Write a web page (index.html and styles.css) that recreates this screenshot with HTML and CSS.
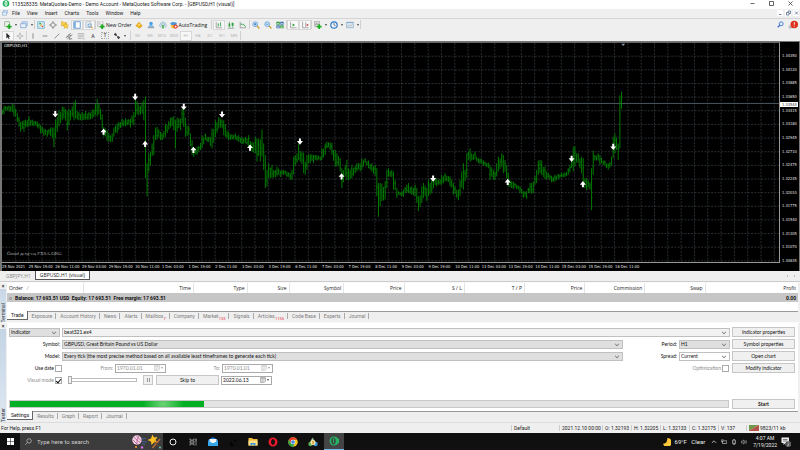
FILE: index.html
```html
<!DOCTYPE html>
<html lang="en">
<head>
<meta charset="utf-8">
<title>113528335: MetaQuotes-Demo</title>
<link rel="stylesheet" href="styles.css">
</head>
<body>
<svg class="defs" aria-hidden="true">
  <symbol id="i-newchart" viewBox="0 0 10 10"><rect x="1" y="1" width="6" height="6" fill="#e9f3e6" stroke="#6a8f66" stroke-width=".7"/><path d="M6.500 4v6M3.500 7h6" stroke="#18a81e" stroke-width="2.200"/></symbol>
  <symbol id="i-profiles" viewBox="0 0 10 10"><rect x="2.500" y="1" width="6.500" height="5" fill="#cfe2f5" stroke="#7fa6d0" stroke-width=".8"/><rect x="1" y="3.500" width="6.500" height="5" fill="#e8f1fb" stroke="#6a96c6" stroke-width=".8"/></symbol>
  <symbol id="i-market" viewBox="0 0 10 10"><rect x="1" y="1" width="8" height="8" fill="#dff0fa" stroke="#5badd4" stroke-width="1"/><path d="M2 4l2-2 1.500 2z" fill="#1a9b35"/><path d="M5 6l2 2 1.500-2z" fill="#e05a20"/><path d="M3 7l4-4" stroke="#e0a020"/></symbol>
  <symbol id="i-cross" viewBox="0 0 10 10"><circle cx="5" cy="5" r="2.800" fill="none" stroke="#777" stroke-width=".9"/><path d="M5 0v3M5 7v3M0 5h3M7 5h3" stroke="#777" stroke-width=".9"/></symbol>
  <symbol id="i-nav" viewBox="0 0 10 10"><path d="M0 1h3l1 1h3v4H0z" fill="#f5cf5a" stroke="#c99820" stroke-width=".5"/><path d="M6 3l1.200 2 2.300.3-1.700 1.500.5 2.400L6 8l-2.200 1.200.5-2.400-1.700-1.500L5 5z" fill="#ffd83a" stroke="#c18d12" stroke-width=".5"/></symbol>
  <symbol id="i-term" viewBox="0 0 10 10"><rect x="1" y="1" width="8" height="8" fill="#fff" stroke="#4d8ac8" stroke-width="1"/><path d="M1.500 1.500h2v7h-2z" fill="#6ea6dd"/></symbol>
  <symbol id="i-test" viewBox="0 0 10 10"><rect x="1" y="1" width="6.500" height="7" fill="#eef3f8" stroke="#9aacbe" stroke-width=".8"/><path d="M2 4h3M2 6h2" stroke="#9aacbe" stroke-width=".7"/><circle cx="6" cy="5.500" r="2" fill="#cfe7f7" stroke="#5c8ab3" stroke-width=".8"/><path d="M7.500 7l2 2" stroke="#d09a28" stroke-width="1.400"/></symbol>
  <symbol id="i-order" viewBox="0 0 10 10"><path d="M1 0h5l1.500 1.500V7H1z" fill="#f6f6f6" stroke="#999" stroke-width=".7"/><path d="M2 2.500h3M2 4h3" stroke="#999" stroke-width=".6"/><path d="M6.500 4v6M3.500 7h6" stroke="#18a81e" stroke-width="2.200"/></symbol>
  <symbol id="i-gold" viewBox="0 0 10 10"><path d="M1 6l4-4.500L9 6 6 9z" fill="#f2b51d" stroke="#c89020" stroke-width=".7"/><path d="M3 5.500L5 3l2 2z" fill="#ffe58a"/></symbol>
  <symbol id="i-person" viewBox="0 0 10 10"><circle cx="5" cy="3" r="2.200" fill="#4b9fe0"/><path d="M1.500 7.500Q1.500 5 5 5t3.500 2.500z" fill="#79b9ea"/><path d="M1 8.300h8" stroke="#999" stroke-width="1.400"/></symbol>
  <symbol id="i-signal" viewBox="0 0 10 10"><path d="M2.500 8.500a4 4 0 1 1 5 0M3.600 6.600a2 2 0 1 1 2.800 0" fill="none" stroke="#88b2cc" stroke-width="1"/><path d="M5 5v4.500" stroke="#29a33a" stroke-width="1.800"/></symbol>
  <symbol id="i-auto" viewBox="0 0 10 10"><ellipse cx="4.500" cy="3.200" rx="4" ry="2" fill="#4b96d2"/><path d="M1 5h6l-1 4H2z" fill="#f0bd36"/><circle cx="7" cy="7" r="2.700" fill="#e0301e"/><rect x="5.900" y="5.900" width="2.200" height="2.200" fill="#fff"/></symbol>
  <symbol id="i-bars" viewBox="0 0 10 10"><path d="M1.500 1v7.500h7.500" fill="none" stroke="#777" stroke-width=".8"/><path d="M4 3v4M4 4h1M7 1.500v5M7 6H6" stroke="#1d9a3a" stroke-width="1"/></symbol>
  <symbol id="i-candle" viewBox="0 0 10 10"><path d="M1 9h8M3 1v7M7 2v6" stroke="#5a8c66" stroke-width=".8"/><path d="M2 3h2v4H2zM5.800 2.500h2.400V6H5.800z" fill="#27a53a"/></symbol>
  <symbol id="i-line" viewBox="0 0 10 10"><path d="M1.500 1v7.500h7.500" fill="none" stroke="#777" stroke-width=".8"/><path d="M2 4l3 0 3.500 3" fill="none" stroke="#1d9a3a"/></symbol>
  <symbol id="i-zoomin" viewBox="0 0 10 10"><path d="M6 6l3.300 3.300" stroke="#d5a531" stroke-width="1.800"/><circle cx="4" cy="4" r="3" fill="#d4e9fa" stroke="#5a9bd6" stroke-width="1"/><path d="M2.500 4h3M4 2.500v3" stroke="#2268a8" stroke-width=".9"/></symbol>
  <symbol id="i-zoomout" viewBox="0 0 10 10"><path d="M6 6l3.300 3.300" stroke="#d5a531" stroke-width="1.800"/><circle cx="4" cy="4" r="3" fill="#d4e9fa" stroke="#5a9bd6" stroke-width="1"/><path d="M2.500 4h3" stroke="#2268a8" stroke-width=".9"/></symbol>
  <symbol id="i-tile" viewBox="0 0 10 10"><path d="M.5 1h4.200v3.700H.5zM5.300 5.300h4.200V9H5.300z" fill="#2e9a3b"/><path d="M5.300 1h4.200v3.700H5.300zM.5 5.300h4.200V9H.5z" fill="#3a6fb8"/><path d="M1.300 2.800h2.600v1.200H1.300zM6 2.800h2.600v1.200H6zM1.300 7h2.600v1.200H1.300zM6 7h2.600v1.200H6z" fill="#dcecdc"/></symbol>
  <symbol id="i-scroll" viewBox="0 0 10 10"><path d="M2 1v7.500h7.500" fill="none" stroke="#777" stroke-width=".8"/><path d="M4.500 3v4L7.500 5z" fill="#1fa038"/></symbol>
  <symbol id="i-shift" viewBox="0 0 10 10"><path d="M2 1v7.500h7.500M6 1.500v6" fill="none" stroke="#777" stroke-width=".8"/><path d="M9 3.500v3L6.500 5z" fill="#c0392b"/></symbol>
  <symbol id="i-ind" viewBox="0 0 10 10"><path d="M1 0h5.500v7H1z" fill="#e0e4e0" stroke="#888" stroke-width=".8"/><path d="M2 5q1.500-4 3 0" fill="none" stroke="#555" stroke-width=".7"/><path d="M6.500 4v6M3.500 7h6" stroke="#18b020" stroke-width="2.200"/></symbol>
  <symbol id="i-clock" viewBox="0 0 10 10"><circle cx="5" cy="5" r="4" fill="#eef6ff" stroke="#2f78c4" stroke-width="1.500"/><path d="M5 2.500V5l2 1" fill="none" stroke="#345" stroke-width=".9"/></symbol>
  <symbol id="i-tmpl" viewBox="0 0 10 10"><rect x="1" y="1.500" width="8" height="7" fill="#dcebf8" stroke="#7fa3c6" stroke-width=".8"/><path d="M1 2h8" stroke="#7fa3c6" stroke-width="1.200"/><path d="M2 7l2-2 2 1.500L8 4" fill="none" stroke="#b0a080" stroke-width=".8"/></symbol>
  <symbol id="i-cursor" viewBox="0 0 10 10"><path d="M3 1v7l1.700-1.500L6 9.200l1-.5L5.800 6H8z" fill="#222"/></symbol>
  <symbol id="i-plus" viewBox="0 0 10 10"><path d="M5 1v3M5 6v3M1 5h3M6 5h3" stroke="#777" stroke-width=".9"/></symbol>
  <symbol id="i-v" viewBox="0 0 10 10"><path d="M5 1.500v7" stroke="#777" stroke-width="1"/></symbol>
  <symbol id="i-h" viewBox="0 0 10 10"><path d="M2 5h6" stroke="#777" stroke-width="1"/></symbol>
  <symbol id="i-d" viewBox="0 0 10 10"><path d="M2 8l6-6" stroke="#777" stroke-width="1"/></symbol>
  <symbol id="i-chan" viewBox="0 0 10 10"><path d="M1 7.500l6-6M3 9l6-6M2 5.500l4 1M4 3.500l4 1M6 8.500h3M6 7v3" stroke="#666" stroke-width=".9"/></symbol>
  <symbol id="i-fibo" viewBox="0 0 10 10"><path d="M1 2h8M1 4h8M1 6h8M1 8h5M7 8.500h2.500" stroke="#999" stroke-width=".8"/></symbol>
  <symbol id="i-shapes" viewBox="0 0 10 10"><path d="M1 3l2-2 2 2-2 2zM5 7l2-2 2 2-2 2z" fill="#444"/><path d="M3 3l4 4" stroke="#444"/></symbol>
  <symbol id="i-cal" viewBox="0 0 10 10"><path d="M1 1h8v6L7 9H1z" fill="#e6e6ea" stroke="#777" stroke-width=".9"/><path d="M1 2.500h8M3 5h4M3 7h2" stroke="#999" stroke-width=".9"/></symbol>
  <symbol id="i-mt" viewBox="0 0 10 10"><circle cx="5" cy="5" r="4.700" fill="#19b257"/><path d="M5 1.600a2.200 3.400 0 1 0 0 6.800 2.200 3.400 0 1 0 0-6.800z" fill="#fff"/><path d="M5 3v4" stroke="#19b257" stroke-width="1.200"/></symbol>
</svg>

<header class="titlebar">
  <svg class="logo"><use href="#i-mt"/></svg>
  <h1>113528335: MetaQuotes-Demo - Demo Account - MetaQuotes Software Corp. - [GBPUSD,H1 (visual)]</h1>
  <div class="winbtns">
    <button aria-label="Minimize"><svg viewBox="0 0 10 10"><path d="M1 5h8" /></svg></button>
    <button aria-label="Restore"><svg viewBox="0 0 10 10"><path d="M1 1h8v8H1z"/></svg></button>
    <button aria-label="Close"><svg viewBox="0 0 10 10"><path d="M1 1l8 8M9 1l-8 8"/></svg></button>
  </div>
</header>

<nav class="menubar">
  <svg class="ico"><use href="#i-profiles"/></svg>
  <button>File</button><button>View</button><button>Insert</button><button>Charts</button><button>Tools</button><button>Window</button><button>Help</button>
  <div class="mdi">
    <button aria-label="Minimize chart"><svg viewBox="0 0 10 10"><path d="M2 8h5"/></svg></button>
    <button aria-label="Restore chart"><svg viewBox="0 0 10 10"><path d="M1 4h5v5H1zM4 4V1h5v5H6"/></svg></button>
    <button aria-label="Close chart"><svg viewBox="0 0 10 10"><path d="M2 2l6 6M8 2l-6 6"/></svg></button>
  </div>
</nav>

<div class="toolbar main">
  <button class="t" aria-label="New chart"><svg><use href="#i-newchart"/></svg></button><i class="dd"></i>
  <button class="t" aria-label="Profiles"><svg><use href="#i-profiles"/></svg></button><i class="dd"></i>
  <i class="sep"></i>
  <button class="t" aria-label="Market Watch"><svg><use href="#i-market"/></svg></button>
  <button class="t" aria-label="Data Window"><svg><use href="#i-cross"/></svg></button>
  <button class="t" aria-label="Navigator"><svg><use href="#i-nav"/></svg></button>
  <button class="t on" aria-label="Terminal"><svg><use href="#i-term"/></svg></button>
  <button class="t on" aria-label="Strategy Tester"><svg><use href="#i-test"/></svg></button>
  <i class="sep"></i>
  <button class="t wide"><svg><use href="#i-order"/></svg>New Order</button>
  <button class="t" aria-label="MetaEditor"><svg><use href="#i-gold"/></svg></button>
  <button class="t" aria-label="Community"><svg><use href="#i-person"/></svg></button>
  <button class="t" aria-label="Signals"><svg><use href="#i-signal"/></svg></button>
  <button class="t wide"><svg><use href="#i-auto"/></svg>AutoTrading</button>
  <i class="sep handle"></i>
  <button class="t on" aria-label="Bar chart"><svg><use href="#i-bars"/></svg></button>
  <button class="t" aria-label="Candlesticks"><svg><use href="#i-candle"/></svg></button>
  <button class="t" aria-label="Line chart"><svg><use href="#i-line"/></svg></button>
  <i class="sep"></i>
  <button class="t" aria-label="Zoom in"><svg><use href="#i-zoomin"/></svg></button>
  <button class="t" aria-label="Zoom out"><svg><use href="#i-zoomout"/></svg></button>
  <button class="t" aria-label="Tile windows"><svg><use href="#i-tile"/></svg></button>
  <i class="sep"></i>
  <button class="t on" aria-label="Auto scroll"><svg><use href="#i-scroll"/></svg></button>
  <button class="t on" aria-label="Chart shift"><svg><use href="#i-shift"/></svg></button>
  <i class="sep"></i>
  <button class="t" aria-label="Indicators"><svg><use href="#i-ind"/></svg></button><i class="dd"></i>
  <button class="t" aria-label="Periods"><svg><use href="#i-clock"/></svg></button><i class="dd"></i>
  <button class="t" aria-label="Templates"><svg><use href="#i-tmpl"/></svg></button><i class="dd"></i>
  <i class="sep"></i>
  <div class="right">
    <button aria-label="Search"><svg viewBox="0 0 10 10"><circle cx="6" cy="4" r="2.800" fill="#eaf2ff" stroke="#3a6fd0" stroke-width="1.300"/><path d="M4 6L1 9" stroke="#3a6fd0" stroke-width="1.800"/></svg></button>
    <button aria-label="Notifications" class="bell"><svg viewBox="0 0 16 16"><path d="M1 9h8v4H5l-2 2v-2H1z" fill="#bbb"/><circle cx="10" cy="7" r="6" fill="#dd2f1b"/><path d="M10 3.500v4M10 9v1.500" stroke="#fff" stroke-width="1.500"/></svg></button>
  </div>
</div>

<div class="toolbar second">
  <button class="t on" aria-label="Cursor"><svg><use href="#i-cursor"/></svg></button>
  <button class="t" aria-label="Crosshair"><svg><use href="#i-plus"/></svg></button>
  <i class="sep"></i>
  <button class="t" aria-label="Vertical line"><svg><use href="#i-v"/></svg></button>
  <button class="t" aria-label="Horizontal line"><svg><use href="#i-h"/></svg></button>
  <button class="t" aria-label="Trendline"><svg><use href="#i-d"/></svg></button>
  <button class="t" aria-label="Channel"><svg><use href="#i-chan"/></svg></button>
  <button class="t" aria-label="Fibonacci"><svg><use href="#i-fibo"/></svg></button>
  <button class="t txt">A</button>
  <button class="t txt"><span class="boxed">T</span></button>
  <button class="t" aria-label="Arrows"><svg><use href="#i-shapes"/></svg></button><i class="dd"></i>
  <i class="sep handle"></i>
  <button class="t tf">M1</button><button class="t tf">M5</button><button class="t tf">M15</button><button class="t tf">M30</button><button class="t tf on">H1</button><button class="t tf">H4</button><button class="t tf">D1</button><button class="t tf">W1</button><button class="t tf">MN</button>
  <i class="sep"></i>
</div>

<main class="chart">
  <div class="plot">
    <svg id="plot" viewBox="6 6 2334 663" preserveAspectRatio="none" role="img" aria-label="GBPUSD H1 price bars"></svg>
    <span class="sym">GBPUSD,H1</span>
    <span class="mark">Östad детд-ец FXSA.ORG</span>
  </div>
  <div class="prices"><span class="now">1.33544</span></div>
  <div class="times"></div>
</main>

<div class="charttabs">
  <button>GBPJPY,H1</button><button class="on">GBPUSD,H1 (visual)</button>
  <span class="arrows"><i></i><i></i></span>
</div>

<section class="dock">
  <div class="side"><button aria-label="Close terminal">×</button><span>Terminal</span></div>
  <div class="panel">
    <table>
      <thead><tr><th>Order &nbsp;&nbsp;<em>/</em></th><th>Time</th><th>Type</th><th>Size</th><th>Symbol</th><th>Price</th><th>S / L</th><th>T / P</th><th>Price</th><th>Commission</th><th>Swap</th><th>Profit</th></tr></thead>
      <tbody><tr><td colspan="11"><b class="dot"></b>Balance: 17 693.51 USD&nbsp; Equity: 17 693.51&nbsp; Free margin: 17 693.51</td><td>0.00</td></tr></tbody>
    </table>
    <div class="tabs">
      <button class="on">Trade</button><button>Exposure</button><button>Account History</button><button>News</button><button>Alerts</button><button>Mailbox <sub>7</sub></button><button>Company</button><button>Market <sub>133</sub></button><button>Signals</button><button>Articles <sub>1155</sub></button><button>Code Base</button><button>Experts</button><button>Journal</button>
    </div>
  </div>
</section>

<section class="dock tester">
  <div class="side"><button aria-label="Close tester">×</button><span>Tester</span></div>
  <div class="panel">
    <form class="form">
      <div class="row">
        <span class="pick kind"><select aria-label="Test type"><option>Indicator</option></select></span>
        <span class="pick grow pale"><select aria-label="File"><option>beat321.ex4</option></select></span>
        <button type="button" class="b">Indicator properties</button>
      </div>
      <div class="row">
        <label class="lead" for="symbol">Symbol:</label>
        <span class="pick grow"><select id="symbol"><option>GBPUSD, Great Britain Pound vs US Dollar</option></select></span>
        <label class="mid" for="period">Period:</label>
        <span class="pick small"><select id="period"><option>H1</option></select></span>
        <button type="button" class="b">Symbol properties</button>
      </div>
      <div class="row">
        <label class="lead" for="model">Model:</label>
        <span class="pick grow"><select id="model"><option>Every tick (the most precise method based on all available least timeframes to generate each tick)</option></select></span>
        <label class="mid" for="spread">Spread:</label>
        <span class="pick small white"><select id="spread"><option>Current</option></select></span>
        <button type="button" class="b">Open chart</button>
      </div>
      <div class="row">
        <label class="chk lead2">Use date<input type="checkbox"></label>
        <label class="from dim" for="from">From:</label>
        <span class="date dim"><input id="from" type="text" value="1970.01.01"><svg><use href="#i-cal"/></svg><i class="dd"></i></span>
        <label class="to dim" for="to">To:</label>
        <span class="date dim"><input id="to" type="text" value="1970.01.01"><svg><use href="#i-cal"/></svg><i class="dd"></i></span>
        <label class="chk opt dim">Optimization<input type="checkbox"></label>
        <button type="button" class="b">Modify indicator</button>
      </div>
      <div class="row">
        <label class="chk lead2 dim">Visual mode<input type="checkbox" checked></label>
        <input class="speed" type="range" min="0" max="32" value="0" aria-label="Speed">
        <button type="button" class="b pause" aria-label="Pause"><i></i><i></i></button>
        <button type="button" class="b skip">Skip to</button>
        <span class="date"><input type="text" value="2022.06.13" aria-label="Skip to date"><svg><use href="#i-cal"/></svg><i class="dd"></i></span>
      </div>
      <div class="row run">
        <div class="progress" role="progressbar" aria-label="Test progress" aria-valuenow="27"><div></div></div>
        <button type="button" class="b start">Start</button>
      </div>
    </form>
    <div class="tabs">
      <button class="on">Settings</button><button>Results</button><button>Graph</button><button>Report</button><button>Journal</button>
    </div>
  </div>
</section>

<footer class="status">
  <span class="help">For Help, press F1</span>
  <span class="c1">Default</span><span class="c2">2021.12.10 00:00</span><span class="c3">O: 1.32193</span><span class="c3">H: 1.32205</span><span class="c3">L: 1.32133</span><span class="c3">C: 1.32175</span><span class="c4">V: 137</span>
  <span class="c5"><svg viewBox="0 0 20 10" preserveAspectRatio="none"><path d="M0 0h20L0 9z" fill="#6f9a4a"/><path d="M20 0v10H0V9z" fill="#b5524a"/></svg>9823/11 kb</span>
</footer>

<div class="taskbar">
  <button class="win" aria-label="Start menu"><svg viewBox="0 0 14 14"><path d="M0 0h6.500v6.500H0zM7.500 0H14v6.500H7.500zM0 7.500h6.500V14H0zM7.500 7.500H14V14H7.500z" fill="#fff"/></svg></button>
  <label class="search"><svg viewBox="0 0 12 12"><circle cx="7" cy="5" r="3.800" fill="none" stroke="#ddd"/><path d="M4 8l-3.500 3.500" stroke="#ddd"/></svg><input type="text" placeholder="Type here to search">
    <svg class="art" viewBox="0 0 60 30"><circle cx="12" cy="12" r="9.500" fill="#f2d3e2"/><path d="M5 6l14 12M10 3l11 11M4 12l9 9M16 4Q10 12 12 21" stroke="#b0558e" stroke-width="1.500" fill="none"/><path d="M21 10l8-1M22 15l9 1M23 19l5 3" stroke="#46639c" stroke-width="2"/><circle cx="10" cy="26" r="2" fill="#f09a26"/><circle cx="22" cy="27" r="2.500" fill="#d56ee0"/><path d="M43 1l3 6 7-1-4 6 4 6-7-1-5 5-1-7-7-3 7-3z" fill="#ffbe22"/><path d="M58 10L43 28" stroke="#b96a35" stroke-width="3"/><path d="M47 15l10 11" stroke="#68473a" stroke-width="2"/><circle cx="58" cy="27" r="2" fill="#5cd0c0"/></svg>
  </label>
  <button aria-label="Cortana"><svg viewBox="0 0 20 20"><circle cx="10" cy="10" r="6" fill="none" stroke="#eee" stroke-width="2"/></svg></button>
  <button aria-label="Task view"><svg viewBox="0 0 20 20"><path d="M4 3v3h8V3M4 17v-3h8v3M4 8h8v4H4zM16 3v14M14.500 6h3" fill="none" stroke="#bbb" stroke-width="1.400"/></svg></button>
  <button aria-label="Mail"><svg viewBox="0 0 20 20"><path d="M0 6l10-6 10 6v12H0z" fill="#1268b8"/><path d="M3 4h14v8H3z" fill="#f4f4f4"/><path d="M0 7l10 6 10-6v11H0z" fill="#35a7ee"/></svg></button>
  <button aria-label="Music"><svg viewBox="0 0 20 20"><path d="M11 3v11a3 3 0 1 1-3-3M11 4q1 3 5 4" fill="none" stroke="#000" stroke-width="2.500"/><path d="M11 3v11" stroke="#1c2b2d"/></svg></button>
  <button aria-label="File Explorer"><svg viewBox="0 0 20 20"><path d="M1 2h7l2 2h9v13H1z" fill="#f3bd3a"/><path d="M1 7h18v10H1z" fill="#ffe08a"/><path d="M5 17v-5h10v5h-3v-2H8v2z" fill="#3a92d8"/></svg></button>
  <button aria-label="Opera"><svg viewBox="0 0 20 20"><path fill-rule="evenodd" d="M10 1a9 9 0 1 0 0 18 9 9 0 1 0 0-18zM10 4q4 1 4 6t-4 6q-4-1-4-6t4-6z" fill="#e8192c"/></svg></button>
  <button aria-label="Chrome"><svg viewBox="0 0 20 20"><circle cx="10" cy="10" r="9.500" fill="#f9c51d"/><path d="M1.600 5.500A9.500 9.500 0 0 1 18.400 5.500H10L6 12z" fill="#e23b2e"/><path d="M1.600 5.500A9.500 9.500 0 0 0 10 19.500l4-7H6z" fill="#2ea04c"/><circle cx="10" cy="10" r="4.600" fill="#fff"/><circle cx="10" cy="10" r="3.600" fill="#3f7de8"/></svg></button>
  <button aria-label="MetaTrader"><svg viewBox="0 0 20 20"><path d="M9 1l7 11-7 3-6-3z" fill="#9bbf9a"/><circle cx="5" cy="14" r="4.500" fill="#57a854"/><circle cx="15" cy="14" r="4.500" fill="#3b8fd2"/><circle cx="10" cy="11" r="5" fill="#f3e3a2"/><path d="M10 8v6" stroke="#c78b22" stroke-width="2.500"/></svg></button>
  <button class="on" aria-label="MetaTrader 4"><svg viewBox="0 0 20 20"><circle cx="10" cy="10" r="9" fill="#25b463"/><path fill-rule="evenodd" d="M9 3a4.500 7 0 1 0 0 14 4.500 7 0 1 0 0-14z" fill="#3b4a41"/><path d="M9 6v8M8 6h3" stroke="#25b463" stroke-width="1.800"/><path d="M16 4l4 2v8l-4 2z" fill="#25b463"/></svg></button>
  <div class="tray">
    <svg class="moon" viewBox="0 0 20 20"><path d="M11 0a11 11 0 1 1-11 14Q11 15 11 0z" fill="#ffc83a"/></svg>
    <span class="temp">69°F&nbsp;&nbsp; Clear</span>
    <svg viewBox="0 0 20 20"><path d="M3 13l7-7 7 7" fill="none" stroke="#ddd" stroke-width="2.500"/></svg>
    <svg viewBox="0 0 20 20"><path d="M5 6h14v9H5zM1 3v6h7M3 1v3M7 1v3" fill="none" stroke="#ddd" stroke-width="2"/></svg>
    <svg viewBox="0 0 20 20"><path d="M5 4h10v11H5zM7 1h6M7 18h7M10 8v4" fill="none" stroke="#ddd" stroke-width="2"/></svg>
    <svg viewBox="0 0 20 20"><path d="M1 7h4l5-4v14l-5-4H1zM13 7q2 3 0 6M16 4q4 6 0 12" fill="none" stroke="#ccc" stroke-width="1.800"/></svg>
    <span class="clock">4:07 AM<br>7/19/2022</span>
    <svg class="note" viewBox="0 0 20 20"><path d="M1 1h15v11h-7l-4 4v-4H1z" fill="#eee"/><path d="M4 5h9M4 8h9" stroke="#333" stroke-width="1.200"/><circle cx="14.500" cy="14" r="5.500" fill="#444" stroke="#999"/><path d="M12.500 12.500q2-2 3.500 0t-3.500 4H17" fill="none" stroke="#fff"/></svg>
  </div>
</div>
<script src="chart.js"></script>
</body>
</html>
```
FILE: styles.css
```css
* { box-sizing: border-box; }
body {
  margin: 0;
  min-height: 100vh;
  display: flex;
  flex-direction: column;
  background: #efefef;
  color: #222;
  font: 5px/6px "Roboto", "Noto Sans", sans-serif;
  overflow-x: hidden;
}
button, input, select {
  font: inherit;
  color: inherit;
  margin: 0;
  padding: 0;
  border: 0;
  background: none;
  border-radius: 0;
}
svg { display: block; flex: none; }
.defs { display: none; }

.titlebar { display: flex; align-items: center; height: 9px; padding: 0 4px 2px 2px; background: #fff; }
.titlebar .logo { width: 8px; height: 7px; }
.titlebar h1 { margin: 0 0 0 2px; font-size: 5px; font-weight: 400; white-space: nowrap; }
.winbtns { display: flex; margin-left: auto; gap: 7px; }
.winbtns button { width: 12px; display: flex; justify-content: center; }
.winbtns svg { width: 5px; height: 5px; fill: none; stroke: #333; stroke-width: 1.5; }

.menubar { display: flex; align-items: center; height: 10px; gap: 7px; padding: 0 1px 1px 2px; border-bottom: 1px solid #d4d4d4; }
.menubar .ico { width: 6px; height: 6px; margin-right: -3px; }
.mdi { display: flex; gap: 2px; margin-left: auto; }
.mdi button { width: 6px; height: 6px; background: #fff; display: flex; justify-content: center; }
.mdi svg { width: 5px; height: 6px; fill: none; stroke: #6b7f99; stroke-width: 1.8; }

.toolbar { display: flex; align-items: center; padding-left: 2px; height: 11px; white-space: nowrap; }
.t { flex: none; width: 12px; height: 10px; display: flex; align-items: center; justify-content: center; }
.t svg { width: 8px; height: 8px; }
.t.on { background: #f8f8f8; border: 1px solid #d8d8d8; }
.t.wide { width: auto; padding: 0 1px; gap: 1px; color: #111; font-family: "Open Sans", "Noto Sans", sans-serif; }
.t.txt { color: #555; font-weight: 600; }
.boxed { border: 1px dotted #aaa; line-height: 5px; padding: 0 1px; }
.t.tf { color: #b4b4b4; font-size: 4px; }
.sep { flex: none; width: 1px; height: 9px; background: #d0d0d0; }
.sep.handle { margin: 0 1px 0 3px; }
.dd { flex: none; width: 4px; height: 2px; display: flex; justify-content: center; }
.dd::before { content: ""; border: 1px solid transparent; border-top: 2px solid #444; }
.toolbar .right { display: flex; align-items: center; gap: 4px; margin-left: auto; padding-right: 2px; }
.right svg { width: 7px; height: 7px; }
.right .bell svg { width: 10px; height: 10px; }

.chart {
  flex: 1;
  min-height: 120px;
  display: grid;
  grid-template: minmax(0, 1fr) 8px / minmax(0, 1fr) 19px;
  background: #000;
  border: 1px solid #777;
  border-width: 1px 1px 0 2px;
  color: #e6e6e6;
}
.plot { position: relative; border-top: 1px solid #666; border-right: 1px solid #999; border-bottom: 1px solid #999; min-height: 0; }
.plot svg { width: 100%; height: 100%; position: absolute; }
.sym { position: absolute; left: 2px; top: 0; font: 4px/6px "DejaVu Sans", sans-serif; }
.mark { position: absolute; left: 5px; bottom: 4px; font: 5px/8px "Liberation Serif", serif; color: #aaa; }
.grid { stroke: #4c565e; stroke-width: 1.6; stroke-dasharray: 6 4; fill: none; }
.level { stroke: #4a5560; stroke-width: 3; }
.bars { stroke: #008c00; stroke-width: 2.6; fill: none; }
.sign { fill: #fff; }
.prices { position: relative; display: flex; flex-direction: column; justify-content: space-between; padding: 11px 0 0 2px; font: 4px/5px "DejaVu Sans Condensed", "DejaVu Sans", sans-serif; }
.now { position: absolute; left: 0; right: 1px; top: 27%; line-height: 5px; padding-left: 2px; background: #fff; color: #333; }
.times { grid-column: 1 / -1; display: flex; padding-right: 19px; font: 4px/8px "DejaVu Sans Condensed", "DejaVu Sans", sans-serif; white-space: nowrap; }
.times span { width: 3.428%; flex: none; }

.charttabs { display: flex; height: 11px; padding-left: 2px; border-bottom: 1px solid #ccc; color: #888; font-family: "Open Sans", "Noto Sans", sans-serif; }
.charttabs button { padding: 0 4px; height: 9px; }
.charttabs .on { background: #fff; color: #222; border: 1px solid #555; border-top: 0; }
.arrows { margin-left: auto; display: flex; gap: 6px; padding: 4px 4px 0 0; }
.arrows i { border: 1px solid transparent; border-right-color: #888; height: 2px; }
.arrows i + i { border-color: transparent transparent transparent #888; }

.dock { display: flex; border-top: 1px solid #fafafa; }
.side { width: 6px; flex: none; display: flex; flex-direction: column; align-items: center; justify-content: space-between; background: linear-gradient(#c3d3e4, #dde7f1); color: #333; }
.side button { width: 100%; height: 6px; line-height: 5px; background: #efefef; font-weight: 700; }
.side span { writing-mode: vertical-rl; transform: rotate(180deg); line-height: 6px; }
.panel { flex: 1; min-width: 0; margin: 0 2px 0 1px; background: #fff; }

table { width: 100%; table-layout: fixed; border-collapse: collapse; margin-bottom: 9px; font-family: "Open Sans", "Noto Sans", sans-serif; }
th { width: 7.6%; height: 10px; padding: 0 2px; font-weight: 400; text-align: right; border-right: 1px solid #e4e4e4; }
th:first-child { width: 9.7%; text-align: left; }
th:nth-child(2) { width: 13.8%; }
th:nth-child(3) { width: 6.8%; }
th:nth-child(4) { width: 5.3%; }
th:nth-child(5) { width: 6.9%; }
th:last-child { width: 11.7%; border-right: 0; }
th em { color: #999; }
td { height: 9px; padding: 0 2px; background: #c6c6c6; font-family: "Roboto", sans-serif; font-weight: 700; color: #111; }
td:last-child { text-align: right; }
.dot { display: inline-block; width: 3px; height: 3px; margin-right: 3px; border: 1px solid #888; border-radius: 50%; }

.tabs { display: flex; align-items: flex-start; height: 11px; background: #efefef; border-top: 1px solid #999; color: #808080; white-space: nowrap; }
.tabs button { height: 6px; margin-top: 1px; padding: 0 3px 0 4px; border-right: 1px solid #aaa; line-height: 6px; }
.tabs .on { height: 9px; margin: -1px 0 0; background: #fff; color: #111; border: 1px solid #666; border-top: 0; border-left: 0; }
.tabs sub { color: #e8303a; font-size: 4px; line-height: 0; margin-left: -1px; }

.form { padding: 4px 3px 2px 2px; display: flex; flex-direction: column; gap: 2px; font: 5px/6px "Lato", "Liberation Sans", sans-serif; color: #111; white-space: nowrap; }
.row { display: flex; align-items: center; height: 10px; gap: 2px; }
.b { flex: none; width: 63px; height: 10px; margin-left: 1px; background: #f0f0f0; border: 1px solid #c6c6c6; }
.row > .b:last-child { margin-left: auto; }
.pick { position: relative; flex: none; display: flex; height: 9px; background: #dfdfdf; border: 1px solid #c0c0c0; }
.pick::after { content: ""; position: absolute; right: 3px; top: 1px; width: 3px; height: 3px; border: solid #777; border-width: 0 1px 1px 0; transform: rotate(45deg) scale(.8); }
.pick select { appearance: none; flex: 1; width: 100%; padding-left: 1px; }
.grow { flex: 1; min-width: 0; }
.kind { width: 51px; }
.small { width: 51px; }
.pale { background: #f2f2f2; }
.white { background: #fff; }
.lead { width: 51px; text-align: right; }
.mid { width: 52px; text-align: right; }
.chk { display: flex; align-items: center; justify-content: flex-end; gap: 1px; }
.lead2 { width: 53px; }
.chk input { appearance: none; width: 7px; height: 7px; background: #fff; border: 1px solid #aaa; display: grid; place-items: center; }
.chk input:checked::before { content: ""; width: 2px; height: 4px; border: solid #111; border-width: 0 1px 1px 0; transform: rotate(40deg); }
.opt { margin-left: auto; }
.opt + .b.b { margin-left: 1px; }
.dim { color: #8c8c8c; }
.from { width: 49px; text-align: right; }
.to { width: 52px; text-align: right; }
.date { flex: none; display: flex; align-items: center; width: 51px; height: 9px; padding: 0 1px; border: 1px solid #aaa; background: #fff; }
.date input { flex: 1; min-width: 0; }
.date svg { width: 6px; height: 6px; }
.date.dim svg, .date.dim .dd { opacity: .5; }
.speed { appearance: none; width: 69px; height: 8px; margin-left: 4px; background: linear-gradient(#bbb, #bbb) center / 100% 4px no-repeat; }
.speed::-webkit-slider-runnable-track { height: 8px; background: linear-gradient(#fff, #fff) center / 67px 2px no-repeat; }
.speed::-webkit-slider-thumb { appearance: none; width: 4px; height: 8px; background: #f2f2f2; border: 1px solid #aaa; }
.pause { width: 10px; margin-left: 4px; display: flex; align-items: center; justify-content: center; gap: 1px; }
.pause i { width: 1px; height: 4px; background: #999; }
.skip { width: 63px; }
.run { margin-top: 12px; }
.progress { flex: 1; height: 8px; background: #e4e4e4; border: 1px solid #c8c8c8; }
.progress div { width: 27%; height: 100%; background: radial-gradient(ellipse 20px 12px at 79% 50%, #6fd477, #06b025); }
.run > .b.start { margin-left: 1px; font-weight: 700; }

.status { display: flex; align-items: center; height: 11px; padding: 0 4px 0 1px; border-top: 1px solid #ddd; white-space: nowrap; }
.status .help { flex: 1; }
.status span + span { flex: none; border-left: 1px solid #ccc; padding-left: 2px; }
.status .c1 { width: 48px; }
.status .c2 { width: 43px; }
.status .c3 { width: 29px; }
.status .c4 { width: 28px; }
.status .c5 { width: 50px; display: flex; align-items: center; gap: 1px; }
.c5 svg { width: 10px; height: 6px; }

.taskbar { display: flex; height: 17px; background: #101010; color: #eee; }
.taskbar > button { width: 20px; flex: none; display: flex; align-items: center; justify-content: center; }
.taskbar > button svg { width: 10px; height: 10px; }
.taskbar > .win svg { width: 7px; height: 7px; }
.search { width: 143px; flex: none; display: flex; align-items: center; padding: 0 2px 0 5px; background: #3c3c3c; }
.search > svg { width: 7px; height: 7px; }
.search input { flex: 1; min-width: 0; padding-left: 5px; font-size: 6px; line-height: 9px; }
.search input::placeholder { color: #ccc; opacity: 1; }
.search > .art { width: 30px; height: 15px; }
.taskbar > .on { margin-left: 1px; background: #444; border-bottom: 1px solid #76b9ed; }
.tray { margin-left: auto; display: flex; align-items: center; gap: 4px; padding-right: 9px; white-space: nowrap; }
.tray svg { width: 6px; height: 6px; }
.tray .moon { width: 8px; height: 8px; }
.temp { font-size: 6px; margin-right: 2px; }
.clock { text-align: center; line-height: 7px; margin-left: 2px; }
.tray .note { width: 10px; height: 10px; }
```
FILE: chart.js
```js
// Price bars: x:high,low in plot units (three units to a pixel).
const data = `5:208,222 15:196,222 22:198,210 30:195,213 38:190,215 45:192,228 50:218,245 57:230,260 64:245,275 72:240,275 80:238,262 90:228,258 97:238,256 105:242,258 115:243,262 125:255,280 135:265,288 145:270,290 155:262,288 162:262,322 166:238,295 172:230,275 178:210,258 186:198,240 194:200,235 202:212,270 208:205,255 215:210,240 221:185,240 226:178,235 232:212,238 240:215,240 250:215,240 260:212,238 270:215,238 280:208,235 288:190,225 295:175,228 302:205,238 308:222,265 314:260,290 320:270,303 328:280,305 336:280,306 344:262,290 352:250,280 360:245,268 368:235,258 376:234,258 386:238,255 394:235,262 400:215,255 405:165,230 412:182,222 420:192,225 428:185,220 433:178,240 437:168,415 442:370,470 448:340,395 454:335,378 460:285,345 466:262,300 474:260,298 482:275,300 490:280,300 498:250,290 506:242,268 514:232,262 520:228,270 524:265,310 527:240,325 534:232,275 541:235,270 548:205,250 553:200,260 559:232,290 566:258,285 573:280,318 579:300,345 584:330,352 592:320,345 600:318,335 608:285,325 616:280,300 624:290,305 632:290,318 640:265,325 648:240,290 656:230,265 664:235,262 672:240,285 680:252,290 690:275,300 700:282,298 710:280,298 720:285,305 730:290,312 740:290,310 750:285,318 758:305,335 766:290,340 774:295,365 780:298,365 787:268,350 791:310,390 796:345,445 802:390,440 810:370,415 818:375,415 826:390,412 834:380,410 844:392,412 854:390,405 864:395,412 872:400,420 878:390,420 884:350,405 892:340,370 899:310,360 906:335,372 912:338,400 918:365,405 924:345,390 932:342,370 942:345,370 952:345,362 962:350,362 970:325,360 976:310,345 984:305,325 992:308,330 1000:308,345 1006:330,380 1014:340,380 1022:355,395 1030:385,445 1036:375,410 1042:360,420 1050:385,422 1058:375,415 1066:378,400 1074:370,395 1082:370,395 1090:355,390 1100:355,370 1110:362,385 1120:370,395 1128:375,408 1133:385,470 1137:430,532 1143:430,500 1149:432,485 1155:425,480 1161:390,445 1168:385,410 1176:390,412 1184:395,450 1190:445,475 1198:455,465 1206:455,470 1214:450,472 1222:435,460 1230:430,460 1238:440,465 1246:435,470 1252:445,490 1260:470,515 1267:440,490 1274:430,475 1282:445,485 1288:420,470 1296:415,460 1304:420,445 1312:415,440 1320:420,435 1328:405,435 1336:400,425 1346:408,425 1356:410,440 1364:430,465 1370:450,475 1377:450,482 1384:420,470 1390:370,450 1396:390,425 1402:340,415 1408:335,360 1413:325,365 1420:340,362 1428:335,358 1436:355,370 1446:355,372 1456:362,378 1468:368,385 1474:375,420 1480:390,420 1486:395,420 1492:370,410 1500:350,395 1508:340,380 1515:345,400 1521:375,415 1528:400,440 1536:425,445 1546:425,448 1556:435,448 1566:440,460 1574:455,475 1580:455,478 1588:445,460 1592:430,460 1598:430,462 1604:425,460 1610:390,430 1616:362,405 1622:360,400 1628:362,405 1636:380,418 1644:395,420 1652:405,420 1660:408,428 1668:405,425 1678:402,418 1688:398,412 1698:398,412 1706:385,405 1714:375,398 1720:320,395 1726:318,380 1732:340,368 1740:340,370 1748:350,400 1753:355,430 1758:415,445 1764:415,452 1770:428,450 1774:390,450 1778:385,512 1782:332,405 1788:345,362 1796:340,362 1804:345,375 1812:362,375 1820:362,378 1828:370,390 1836:350,378 1840:290,355 1846:280,340 1852:292,330 1857:310,360 1862:165,325 1867:153,205`;

const keys = data.split(" ").map(s => s.split(/[:,]/).map(Number));
let bars = "";

// Walk the plot one hour (five units) at a time; each bar takes the nearest
// measured range, and bars between two measurements take a narrower one.
let last = -1;
for (let x = 7, n = 0; x < 1869; x += 5, n++) {
  let k = 0;
  keys.forEach((key, i) => { if (Math.abs(key[0] - x) < Math.abs(keys[k][0] - x)) k = i; });
  for (let j = last + 1; j < k; j++) {
    if (keys[j][2] - keys[j][1] > 60) bars += `M${keys[j][0]} ${keys[j][1]}V${keys[j][2]}`;
  }
  let [, hi, lo] = keys[k];
  if (k === last) {
    const next = keys[Math.min(k + 1, keys.length - 1)];
    const a = (hi + next[1]) / 2, b = (lo + next[2]) / 2;
    const cut = (b - a) * .25;
    hi = n % 2 ? a + cut : a;
    lo = n % 2 ? b : b - cut;
  }
  last = k;
  const size = lo - hi;
  bars += `M${x} ${hi}V${lo}M${x - 2} ${hi + size * (n % 2 ? .65 : .3)}h2M${x} ${hi + size * (n % 3 ? .35 : .7)}h2`;
}

let grid = "";
for (let x = 46; x < 2340; x += 40) grid += `M${x} 6V669`;
for (let i = 0; i < 16; i++) grid += `M6 ${46 + i * 41.3}H2340`;

const down = [[166, 222], [406, 170], [552, 200], [667, 223], [901, 305], [1301, 417], [1717, 357], [1842, 321]];
const up = [[311, 274], [436, 311], [581, 329], [751, 322], [1026, 409], [1525, 426], [1751, 433]];
const sign = ([x, y], d) => `M${x - 3} ${y - 10 * d}h6v${8 * d}h6l-9 ${11 * d}l-9 ${-11 * d}h6z`;

document.getElementById("plot").innerHTML =
  `<path class="grid" d="${grid}"/><path class="level" d="M6 189H2340"/><path class="bars" d="${bars}"/>` +
  `<path class="sign" d="${down.map(p => sign(p, 1)).join("")}${up.map(p => sign(p, -1)).join("")}"/>` +
  `<path d="M1866 8h12l-6 7z" fill="#8899aa"/>`;

const addLabels = (target, labels) => labels.forEach(text => {
  const span = document.createElement("span");
  span.textContent = text;
  document.querySelector(target).append(span);
});
addLabels(".prices", ["1.34350", "1.34120", "1.33885", "1.33650", "1.33415", "1.33180", "1.32945", "1.32710", "1.32475", "1.32245", "1.32010", "1.31775", "1.31540", "1.31305", "1.31070", "1.30835"]);
addLabels(".times", ["25 Nov 2021", "25 Nov 19:00", "26 Nov 11:00", "29 Nov 03:00", "29 Nov 19:00", "30 Nov 11:00", "1 Dec 03:00", "1 Dec 19:00", "2 Dec 11:00", "3 Dec 03:00", "3 Dec 19:00", "6 Dec 11:00", "7 Dec 03:00", "7 Dec 19:00", "8 Dec 11:00", "9 Dec 03:00", "9 Dec 19:00", "10 Dec 11:00", "13 Dec 03:00", "13 Dec 19:00", "14 Dec 11:00", "15 Dec 03:00", "15 Dec 19:00", "16 Dec 11:00"]);
```
